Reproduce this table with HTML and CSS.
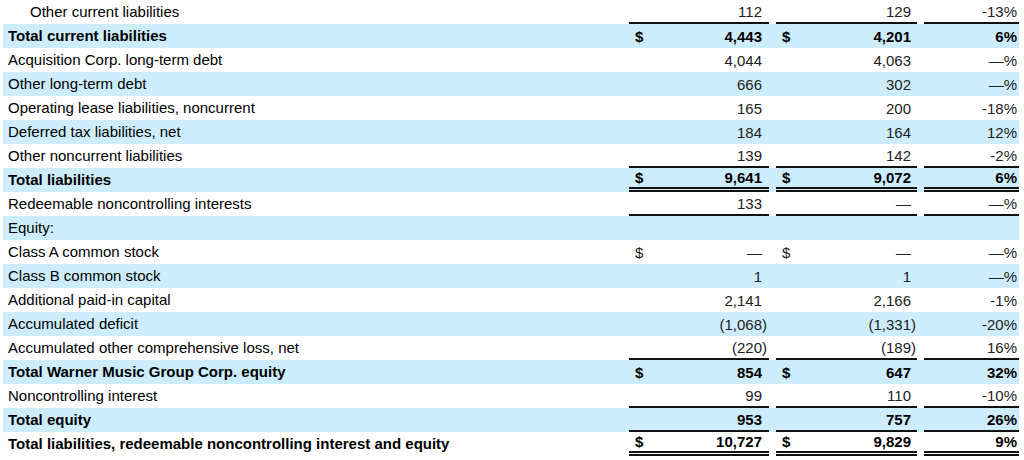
FILE: index.html
```html
<!DOCTYPE html>
<html lang="en">
<head>
<meta charset="utf-8">
<title>Balance sheet</title>
<link rel="stylesheet" href="styles.css">
</head>
<body>
<div class="sheet">
  <div class="row">
    <div class="label indent">Other current liabilities</div>
    <div class="val ul"><span class="cur"></span><span>112</span></div>
    <div class="val ul"><span class="cur"></span><span>129</span></div>
    <div class="pct ul">-13%</div>
  </div>
  <div class="row blue bold">
    <div class="label">Total current liabilities</div>
    <div class="val"><span class="cur">$</span><span>4,443</span></div>
    <div class="val"><span class="cur">$</span><span>4,201</span></div>
    <div class="pct">6%</div>
  </div>
  <div class="row">
    <div class="label">Acquisition Corp. long-term debt</div>
    <div class="val"><span class="cur"></span><span>4,044</span></div>
    <div class="val"><span class="cur"></span><span>4,063</span></div>
    <div class="pct">—%</div>
  </div>
  <div class="row blue">
    <div class="label">Other long-term debt</div>
    <div class="val"><span class="cur"></span><span>666</span></div>
    <div class="val"><span class="cur"></span><span>302</span></div>
    <div class="pct">—%</div>
  </div>
  <div class="row">
    <div class="label">Operating lease liabilities, noncurrent</div>
    <div class="val"><span class="cur"></span><span>165</span></div>
    <div class="val"><span class="cur"></span><span>200</span></div>
    <div class="pct">-18%</div>
  </div>
  <div class="row blue">
    <div class="label">Deferred tax liabilities, net</div>
    <div class="val"><span class="cur"></span><span>184</span></div>
    <div class="val"><span class="cur"></span><span>164</span></div>
    <div class="pct">12%</div>
  </div>
  <div class="row">
    <div class="label">Other noncurrent liabilities</div>
    <div class="val ul"><span class="cur"></span><span>139</span></div>
    <div class="val ul"><span class="cur"></span><span>142</span></div>
    <div class="pct ul">-2%</div>
  </div>
  <div class="row blue bold">
    <div class="label">Total liabilities</div>
    <div class="val dbl"><span class="cur">$</span><span>9,641</span></div>
    <div class="val dbl"><span class="cur">$</span><span>9,072</span></div>
    <div class="pct dbl">6%</div>
  </div>
  <div class="row">
    <div class="label">Redeemable noncontrolling interests</div>
    <div class="val ul"><span class="cur"></span><span>133</span></div>
    <div class="val ul"><span class="cur"></span><span>—</span></div>
    <div class="pct ul">—%</div>
  </div>
  <div class="row blue">
    <div class="label">Equity:</div>
    <div class="val"></div>
    <div class="val"></div>
    <div class="pct"></div>
  </div>
  <div class="row">
    <div class="label">Class A common stock</div>
    <div class="val"><span class="cur">$</span><span>—</span></div>
    <div class="val"><span class="cur">$</span><span>—</span></div>
    <div class="pct">—%</div>
  </div>
  <div class="row blue">
    <div class="label">Class B common stock</div>
    <div class="val"><span class="cur"></span><span>1</span></div>
    <div class="val"><span class="cur"></span><span>1</span></div>
    <div class="pct">—%</div>
  </div>
  <div class="row">
    <div class="label">Additional paid-in capital</div>
    <div class="val"><span class="cur"></span><span>2,141</span></div>
    <div class="val"><span class="cur"></span><span>2,166</span></div>
    <div class="pct">-1%</div>
  </div>
  <div class="row blue">
    <div class="label">Accumulated deficit</div>
    <div class="val"><span class="cur"></span><span class="neg">(1,068)</span></div>
    <div class="val"><span class="cur"></span><span class="neg">(1,331)</span></div>
    <div class="pct">-20%</div>
  </div>
  <div class="row">
    <div class="label">Accumulated other comprehensive loss, net</div>
    <div class="val ul"><span class="cur"></span><span class="neg">(220)</span></div>
    <div class="val ul"><span class="cur"></span><span class="neg">(189)</span></div>
    <div class="pct ul">16%</div>
  </div>
  <div class="row blue bold">
    <div class="label">Total Warner Music Group Corp. equity</div>
    <div class="val"><span class="cur">$</span><span>854</span></div>
    <div class="val"><span class="cur">$</span><span>647</span></div>
    <div class="pct">32%</div>
  </div>
  <div class="row">
    <div class="label">Noncontrolling interest</div>
    <div class="val ul"><span class="cur"></span><span>99</span></div>
    <div class="val ul"><span class="cur"></span><span>110</span></div>
    <div class="pct ul">-10%</div>
  </div>
  <div class="row blue bold">
    <div class="label">Total equity</div>
    <div class="val ul"><span class="cur"></span><span>953</span></div>
    <div class="val ul"><span class="cur"></span><span>757</span></div>
    <div class="pct ul">26%</div>
  </div>
  <div class="row bold">
    <div class="label">Total liabilities, redeemable noncontrolling interest and equity</div>
    <div class="val dbl"><span class="cur">$</span><span>10,727</span></div>
    <div class="val dbl"><span class="cur">$</span><span>9,829</span></div>
    <div class="pct dbl">9%</div>
  </div>
</div>
</body>
</html>
```
FILE: styles.css
```css
html, body {
  margin: 0;
  padding: 0;
  background: #ffffff;
}
body {
  font-family: "Liberation Sans", Arial, sans-serif;
  font-size: 15px;
  color: #111;
}
.sheet {
  padding: 0 5px 0 3px;
}
.row {
  display: grid;
  grid-template-columns: 1fr 140px 148px 102px;
  height: 24px;
}
.row.blue {
  background: #cdedfc;
}
.row.bold {
  font-weight: bold;
  color: #000;
}
.label {
  padding-left: 5px;
  line-height: 24px;
  white-space: nowrap;
  color: #000;
}
.label.indent {
  padding-left: 27px;
}
.val, .pct {
  box-sizing: border-box;
  height: 24px;
  display: flex;
  align-items: center;
  color: #222;
}
.bold .val, .bold .pct {
  color: #000;
}
.val {
  justify-content: space-between;
  padding: 0 7px 0 6px;
}
.val + .val {
  margin-left: 7px;
  padding-right: 6px;
}
.pct {
  margin-left: 7px;
  justify-content: flex-end;
  padding-right: 2px;
}
.ul {
  border-bottom: 2px solid #111;
}
.dbl {
  border-bottom: 5px double #111;
}
.neg {
  margin-right: -5px;
}
```
